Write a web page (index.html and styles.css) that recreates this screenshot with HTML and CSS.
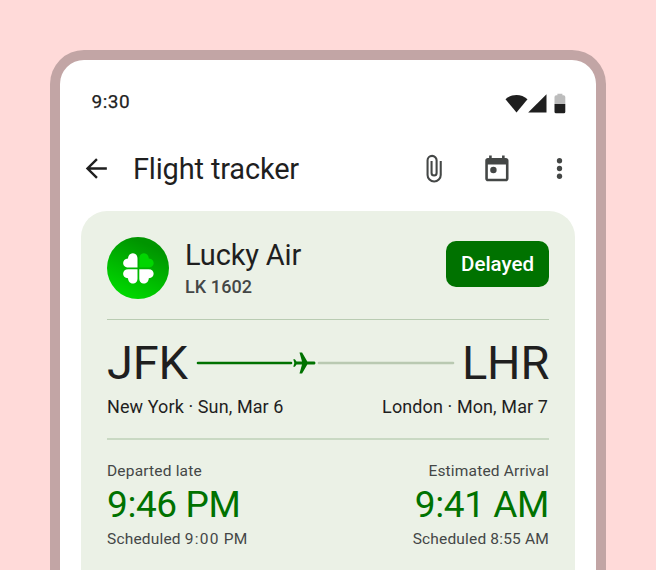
FILE: index.html
```html
<!DOCTYPE html>
<html lang="en">
<head>
<meta charset="utf-8">
<title>Flight tracker</title>
<link rel="stylesheet" href="styles.css">
</head>
<body>
<main class="phone">
  <div class="status">
    <span class="clock">9:30</span>
    <svg class="status-icons" width="62" height="22" viewBox="0 0 62 22">
      <path fill="#1f1f1f" d="M0.5 6.3C6.500 0.400 16.500 0.400 22.500 6.300L11.500 19.500Z"/>
      <path fill="#1f1f1f" d="M41.500 1.300V19.600H23.200Z"/>
      <path fill="#bcbcbc" d="M49.500 11V4Q49.500 2.300 51.200 2.300H52.400V.8H57.400V2.300H58.600Q60.300 2.300 60.300 4V11Z"/>
      <path fill="#1f1f1f" d="M49.500 11H60.300V18.700Q60.300 20.200 58.800 20.200H51Q49.500 20.200 49.500 18.700Z"/>
    </svg>
  </div>
  <header class="appbar">
    <svg class="back" width="31" height="31" viewBox="0 0 24 24"><path fill="#1f1f1f" d="M20 11.100H7.300l5.700-5.700L11.700 4l-8 8 8 8 1.300-1.400-5.700-5.700H20z"/></svg>
    <h1 class="title">Flight tracker</h1>
    <div class="actions">
      <svg width="31" height="31" viewBox="0 0 24 24"><path fill="none" stroke="#444746" stroke-width="1.600" d="M17.900 6v10.750a5.100 5.100 0 0 1-10.200 0V5.500a3.500 3.500 0 0 1 7 0V15.300a1.950 1.950 0 0 1-3.900 0V6" transform="translate(-.3 .2)"/></svg>
      <svg width="31" height="31" viewBox="0 0 24 24"><path fill="#444746" fill-rule="evenodd" d="M6 2h2v2h8V2h2v2h1c1.100 0 2 .9 2 2v14c0 1.100-.9 2-2 2H5c-1.100 0-2-.9-2-2V6c0-1.100.9-2 2-2h1zM5 9v11h14V9z" transform="translate(.3 -.1)"/><circle cx="9.600" cy="13.200" r="2.500" fill="#444746"/></svg>
      <svg width="31" height="31" viewBox="0 0 24 24" fill="#444746"><circle cx="12" cy="6" r="2.050"/><circle cx="12" cy="12" r="2.050"/><circle cx="12" cy="18" r="2.050"/></svg>
    </div>
  </header>
  <section class="card">
    <div class="airline">
      <svg class="logo" width="62" height="62" viewBox="0 0 62 62">
        <defs>
          <linearGradient id="disc" x1=".25" y1=".9" x2=".6" y2=".1"><stop offset="0" stop-color="#00d600"/><stop offset="1" stop-color="#009400"/></linearGradient>
          <path id="leaf" d="M-.9-.9H-10.200C-16.800-.9-17-9.600-10.400-9.900C-10-17-.9-16.800-.9-10Z"/>
        </defs>
        <circle cx="31" cy="31" r="31" fill="url(#disc)"/>
        <g fill="#fff" transform="translate(31.400 31.400)">
          <use href="#leaf"/>
          <use href="#leaf" transform="scale(-1 1)" fill="#00d600"/>
          <use href="#leaf" transform="scale(1 -1)"/>
          <use href="#leaf" transform="scale(-1 -1)"/>
        </g>
      </svg>
      <div class="names">
        <div class="airline-name">Lucky Air</div>
        <div class="flight-number">LK 1602</div>
      </div>
      <div class="badge">Delayed</div>
    </div>
    <div class="route">
      <div class="airports">
        <span class="code">JFK</span>
        <svg class="track" width="260" height="26" viewBox="0 0 260 26">
          <path stroke="#007200" stroke-width="2.600" stroke-linecap="round" d="M2 13H95"/>
          <path stroke="#b9c9b1" stroke-width="2.600" stroke-linecap="round" d="M123 13H257"/>
          <path fill="#007200" d="M119.500 13c0-.9-.7-1.500-1.600-1.500H111.300L106.100 2.500H103.500L106 11.500H100.500L98.900 9.300H97.300L98.300 13L97.300 16.700H98.900L100.500 14.500H106L103.500 23.500H106.100L111.300 14.500H117.900C118.800 14.500 119.500 13.900 119.500 13Z"/>
        </svg>
        <span class="code code-end">LHR</span>
      </div>
      <div class="places"><span class="from">New York · Sun, Mar 6</span><span class="to">London · Mon, Mar 7</span></div>
    </div>
    <div class="times">
      <div class="time">
        <div class="label">Departed late</div>
        <div class="value">9:46 PM</div>
        <div class="label">Scheduled <span class="sched">9:00</span> PM</div>
      </div>
      <div class="time time-end">
        <div class="label">Estimated Arrival</div>
        <div class="value">9:41 AM</div>
        <div class="label">Scheduled 8:55 AM</div>
      </div>
    </div>
  </section>
</main>
</body>
</html>
```
FILE: styles.css
```css
* { box-sizing: border-box; }
body {
  margin: 0;
  height: 570px;
  overflow: hidden;
  padding: 49.5px 50px 0;
  background: #ffdad9;
  font-family: Roboto, "Liberation Sans", sans-serif;
  color: #1f1f1f;
}
svg { display: block; flex: none; }
.phone {
  height: 520.5px;
  border: 10px solid #c2a5a5;
  border-top-width: 10.5px;
  border-bottom: 0;
  border-radius: 34px 34px 0 0;
  background: #fff;
  padding: 0 21px;
}
.status {
  height: 84px;
  padding: 0 8.5px 0 10.5px;
  display: flex;
  justify-content: space-between;
  align-items: center;
}
.clock { font-size: 19px; font-weight: 400; letter-spacing: .5px; -webkit-text-stroke: .25px #1f1f1f; }
.status-icons { margin-top: 4px; }
.appbar {
  height: 67px;
  padding-bottom: 17px;
  display: flex;
  align-items: center;
}
.title {
  margin: 0 auto 0 21px;
  font-size: 29px;
  line-height: 34px;
  font-weight: 400;
  letter-spacing: -.17px;
}
.actions { display: flex; gap: 32px; }
.card {
  height: 359px;
  padding: 0 26px;
  border-radius: 26px 26px 0 0;
  background: #ebf1e6;
}
.airline {
  height: 109px;
  padding-top: 6px;
  display: flex;
  align-items: center;
  border-bottom: 1px solid #b9ccb2;
}
.names { margin: 5px auto 0 16px; }
.airline-name { font-size: 29px; line-height: 34px; letter-spacing: -.17px; }
.flight-number { font-size: 18px; line-height: 30px; font-weight: 500; color: #444746; letter-spacing: .1px; }
.badge {
  width: 103px;
  height: 46px;
  margin-bottom: 7px;
  border-radius: 10px;
  background: #007200;
  color: #fff;
  font-size: 20.500px;
  line-height: 46px;
  font-weight: 500;
  text-align: center;
}
.route { height: 120px; padding-top: 15px; border-bottom: 2px solid #c9d9c3; }
.airports { height: 56px; display: flex; align-items: center; justify-content: space-between; }
.code { width: 81px; font-size: 47px; line-height: 56px; white-space: nowrap; letter-spacing: -.2px; }
.code-end { width: 86px; margin-right: 1px; text-align: right; }
.airports .track { margin: 0 auto 0 8px; }
.places { display: flex; justify-content: space-between; font-size: 18px; line-height: 32px; letter-spacing: .1px; }
.places .to { margin-right: 1px; }
.times { display: flex; justify-content: space-between; padding-top: 19px; }
.time-end { text-align: right; }
.label { font-size: 15.500px; line-height: 24px; color: #444746; letter-spacing: .18px; }
.sched { letter-spacing: 1.3px; }
.value { font-size: 37px; line-height: 44px; color: #007200; letter-spacing: -.4px; }
```
